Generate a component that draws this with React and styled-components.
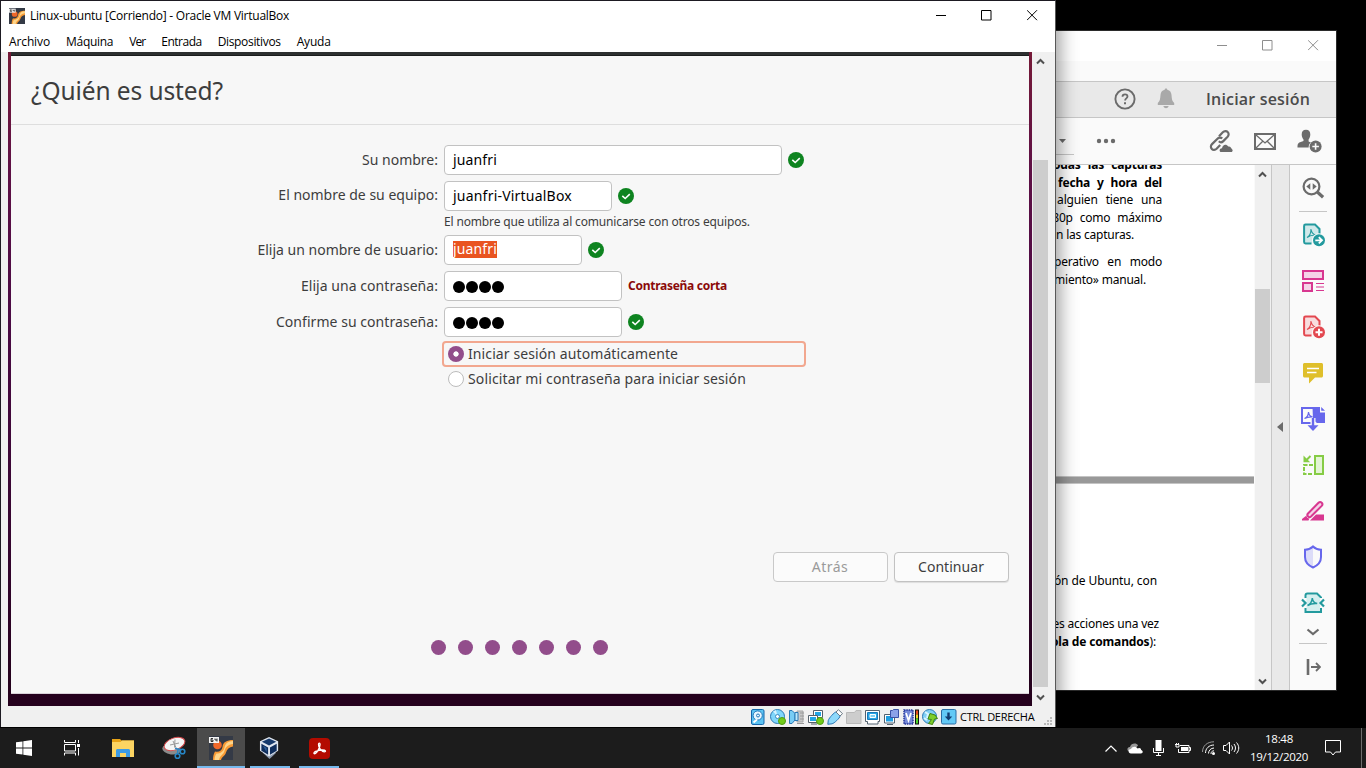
import React from "react";
import styled, { createGlobalStyle } from "styled-components";

const GlobalStyle = createGlobalStyle`
  * { box-sizing: border-box; }
  body { margin: 0; background: #000; overflow: hidden; font-family: "Open Sans", "Noto Sans", sans-serif; }
  svg { display: block; flex: none; }
`;

const Desktop = styled.div`
  position: relative;
  width: 1366px;
  height: 768px;
  overflow: hidden;
  background: #000;
`;

const Label = styled.span`
  white-space: nowrap;
  letter-spacing: ${(p) => p.$track || 0}px;
  word-spacing: ${(p) => p.$words || 0}px;
`;

/* ---------- shared window parts ---------- */

const Controls = styled.div`
  display: flex;
  align-items: center;
  gap: 35px;
  margin-left: auto;
  color: ${(p) => p.$color};
`;

function WindowControls({ color }) {
  return (
    <Controls $color={color}>
      <svg width="11" height="11" viewBox="0 0 11 11" stroke="currentColor" fill="none"><path d="M1 5.5h10" /></svg>
      <svg width="11" height="11" viewBox="0 0 11 11" stroke="currentColor" fill="none"><path d="M.5 .5h9.500v9.500h-9.500z" /></svg>
      <svg width="11" height="11" viewBox="0 0 11 11" stroke="currentColor" fill="none"><path d="M0 .2l10 10M10 .2l-10 10" /></svg>
    </Controls>
  );
}

const Chevron = ({ up, color = "#505050" }) => (
  <svg width="9" height="7" viewBox="0 0 9 7" fill="none" stroke={color} strokeWidth="2">
    <path d={up ? "M1 5.5l3.500-3.500 3.500 3.500" : "M1 1.500l3.500 3.500 3.500-3.500"} />
  </svg>
);

/* ---------- PDF reader window ---------- */

const ReaderWindow = styled.section`
  position: absolute;
  left: 1030px;
  top: 30px;
  width: 307px;
  height: 661px;
  display: flex;
  flex-direction: column;
  background: #fafafa;
  border: 1px solid #2b2b2b;
`;
const ReaderTitle = styled.header`
  height: 30px;
  flex: none;
  display: flex;
  align-items: center;
  padding: 0 17px 1px 0;
  background: #fff;
`;
const ReaderMenu = styled.div`
  height: 20px;
  flex: none;
  background: #fafafa;
`;
const ReaderTabs = styled.div`
  height: 37px;
  flex: none;
  display: flex;
  align-items: center;
  justify-content: flex-end;
  padding: 0 26px 2px 0;
  background: #e9e9e9;
  border-top: 1px solid #c6c6c6;
  border-bottom: 1px solid #c6c6c6;
`;
const SignIn = styled(Label)`
  margin-left: 31px;
  font-size: 16px;
  font-weight: 600;
  line-height: 22px;
  color: #4b4b4b;
`;
const ReaderTools = styled.div`
  height: 47px;
  flex: none;
  display: flex;
  align-items: center;
  padding: 0 14px 0 0;
  border-bottom: 1px solid #c6c6c6;
`;
const PageField = styled.div`
  width: 43px;
  height: 27px;
  display: flex;
  align-items: center;
  justify-content: flex-end;
  padding-right: 8px;
  border-bottom: 1px solid #c6c6c6;
`;
const ToolGap = styled.div`
  width: ${(p) => p.$w}px;
  flex: none;
`;
const ReaderBody = styled.div`
  flex: 1;
  min-height: 0;
  display: flex;
`;
const Pages = styled.div`
  width: 223px;
  overflow: hidden;
  background: #fff;
  color: #000;
`;
const Page = styled.div`
  height: ${(p) => p.$h}px;
  padding-top: ${(p) => p.$top || 0}px;
  overflow: hidden;
`;
const PageGap = styled.div`
  height: 8px;
  background: #999;
  border-top: 1px solid #c4c4c4;
  border-bottom: 1px solid #c4c4c4;
`;
const Line = styled.div`
  display: flex;
  justify-content: flex-end;
  height: ${(p) => p.$h || 17.4}px;
  margin-top: ${(p) => (p.$scrolled ? -9 : 0)}px;
  line-height: 17px;
  padding-right: ${(p) => p.$r || 92}px;
  font-family: "Noto Sans", sans-serif;
  font-size: 12px;
  font-weight: ${(p) => (p.$bold ? 700 : 400)};
`;
const ScrollTrack = styled.div`
  width: ${(p) => p.$w}px;
  flex: none;
  display: flex;
  flex-direction: column;
  align-items: flex-start;
  justify-content: space-between;
  background: #f0f0f0;
`;
const ScrollArrow = styled.div`
  width: 15px;
  height: 18px;
  display: flex;
  align-items: center;
  justify-content: center;
`;
const ScrollThumb = styled.div`
  width: 15px;
  height: ${(p) => p.$h}px;
  margin-top: ${(p) => p.$top}px;
  margin-bottom: auto;
  background: #cdcdcd;
`;
const Splitter = styled.div`
  width: 19px;
  flex: none;
  display: flex;
  align-items: center;
  justify-content: center;
  padding: 0 2px 2px 0;
  background: #e9e9e9;
  border-left: 1px solid #c6c6c6;
  border-right: 1px solid #c6c6c6;
`;
const ToolRail = styled.aside`
  flex: 1;
  display: flex;
  flex-direction: column;
  align-items: center;
`;
const ToolSlot = styled.div`
  height: ${(p) => p.$h || 46}px;
  padding-bottom: ${(p) => p.$lift || 0}px;
  display: flex;
  align-items: center;
  justify-content: center;
`;
const Divider = styled.div`
  width: 28px;
  height: 1px;
  background: #c6c6c6;
`;

const HelpIcon = () => (
  <svg width="22" height="22" viewBox="0 0 22 22" fill="none" stroke="#6b6b6b">
    <circle cx="11" cy="11" r="9.600" strokeWidth="1.900" />
    <path d="M8.500 8.700c0-1.500 1-2.400 2.500-2.400s2.500.9 2.500 2.200c0 1.900-2.400 1.900-2.400 4" strokeWidth="1.800" />
    <path d="M11 14.300v2" strokeWidth="2" />
  </svg>
);
const BellIcon = () => (
  <svg width="18" height="21" viewBox="0 0 18 21" fill="#a9a9a9">
    <path d="M9 .5c.8 0 1.300.5 1.300 1.300 2.700.6 4 2.600 4.200 5.200.3 4.200.6 6.200 2.700 7.900v2H.8v-2c2.100-1.700 2.400-3.700 2.700-7.900C3.700 4.400 5 2.400 7.700 1.800 7.700 1 8.200.5 9 .5z" />
    <path d="M6.300 18h5.400c-.6 1.600-1.500 2.200-2.700 2.200S6.900 19.600 6.300 18z" />
  </svg>
);
const LinkIcon = () => (
  <svg width="24" height="24" viewBox="0 0 24 24" fill="none" stroke="#6b6b6b" strokeWidth="2.200">
    <path d="M10 7.200l3.800-4c1.500-1.500 3.700-1.500 4.900-.2 1.300 1.200 1.200 3.400-.1 4.800l-4.300 4.300c-1.300 1.300-3.200 1.400-4.500.2" />
    <path d="M13.200 9.600c-1.200-1.300-3.400-1.200-4.700.1L3 15.100c-1.400 1.400-1.500 3.600-.2 4.800 1.200 1.300 3.400 1.200 4.800-.1l3.600-3.700" />
    <path d="M12 23c-1.700 0-2.300-3.200 1-3.700.6-3.800 4.200-5 6.300-1.700 2.500-.4 2.600 1.800 3.600 2.400 1.300 1 .8 3-.7 3z" fill="#6b6b6b" stroke="none" />
  </svg>
);
const MailIcon = () => (
  <svg width="22" height="17" viewBox="0 0 22 17" fill="none" stroke="#6b6b6b">
    <path d="M1 1h20v15H1z" strokeWidth="2" />
    <path d="M2 2l9 8 9-8M2 15l6.500-6.500M20 15l-6.500-6.500" strokeWidth="1.300" />
  </svg>
);
const AddUserIcon = () => (
  <svg width="25" height="24" viewBox="0 0 25 24" fill="#6b6b6b">
    <path d="M9 .8c3 0 4.300 2 4.300 4.800 0 2.200-.8 3.800-1.700 4.800v2l2.200 1c-1.600 1.300-2.300 3-2.100 5.200H.5c0-3.400.4-4.500 2.500-5.300l3.500-1.300v-1.600c-1-1-1.800-2.600-1.800-4.800C4.700 2.800 6 .8 9 .8z" />
    <circle cx="18.600" cy="17.500" r="6" />
    <path d="M18.600 14.200v6.600M15.300 17.500h6.600" stroke="#fafafa" strokeWidth="1.600" />
  </svg>
);
const acrobatMark = "M6.500 14.500c2.800-1.300 4.500-3.700 4.800-7.500.2 3.300 1.700 5 4.900 5.600-4.400-.3-7 .3-9.700 1.900z";

const ZoomToolIcon = () => (
  <svg width="24" height="24" viewBox="0 0 24 24" fill="none" stroke="#6b6b6b">
    <circle cx="10.500" cy="10.500" r="7.900" strokeWidth="2.200" />
    <path d="M16.300 16l5.800 5.300" strokeWidth="3.200" />
    <path d="M9.300 7.300v6.400l-4-3.200zM11.700 7.300v6.400l4-3.200z" fill="#6b6b6b" stroke="none" />
  </svg>
);
const PdfBadgeIcon = ({ color, tint, add }) => (
  <svg width="24" height="24" viewBox="0 0 24 24" fill="none" stroke={color}>
    <path d="M10.500 20.500H4.500a1.400 1.400 0 0 1-1.400-1.400V2.900c0-.8.600-1.400 1.400-1.400h9.500l4.500 4.500v5.500" fill={tint} strokeWidth="2" />
    <path d="M6 14.500c2.800-1.500 4-4.500 4-8.500.4 3.700 1.900 5.500 5.200 6-4.500-.2-6.700.7-9.200 2.500z" strokeWidth="1.100" />
    <circle cx="18" cy="17.300" r="7" fill="#fafafa" stroke="none" />
    <circle cx="18" cy="17.300" r="6" fill={color} stroke="none" />
    {add ? (
      <path d="M18 13.800v7M14.500 17.300h7" stroke="#fff" strokeWidth="2" />
    ) : (
      <path d="M14.300 17.300h6M17.800 14.200l3.200 3.100-3.200 3.100" stroke="#fff" strokeWidth="1.800" />
    )}
  </svg>
);
const OrganizeIcon = () => (
  <svg width="24" height="24" viewBox="0 0 24 24" fill="#f5d3e8" stroke="#d83790">
    <path d="M2 2h20v8H2zM2 14h9v8H2z" strokeWidth="2" />
    <path d="M15 14.500h8M15 18h8M15 21.500h8" strokeWidth="1.100" />
  </svg>
);
const CommentIcon = () => (
  <svg width="24" height="24" viewBox="0 0 24 24">
    <path d="M3.500 2h17c.8 0 1.500.7 1.500 1.500V15c0 .8-.7 1.500-1.500 1.500H14L8 22.500v-6H3.500c-.8 0-1.500-.7-1.500-1.500V3.500C2 2.700 2.700 2 3.500 2z" fill="#dfbf2b" />
    <path d="M6 7.500h12M6 11.500h9.500" stroke="#fff" strokeWidth="1.600" />
  </svg>
);
const CombineIcon = () => (
  <svg width="26" height="26" viewBox="0 0 26 26" fill="none" stroke="#6767ec">
    <path d="M13 2H2v15h10" strokeWidth="2" />
    <path d="M12.500 1H20v5.500h5V17h-8l-4-3zM21.200 1l3.800 3.800h-3.800z" fill="#6767ec" stroke="none" />
    <path d="M4.500 12.500c2.400-1 3.800-3 4-6.400.3 2.900 1.600 4.300 4 4.800-3.600-.2-5.700.3-8 1.600z" strokeWidth="1.200" />
    <path d="M13 12v8" stroke="#fafafa" strokeWidth="5" />
    <path d="M13 12v9" strokeWidth="2.400" />
    <path d="M7.500 19.200h11L13 25z" fill="#6767ec" stroke="none" />
  </svg>
);
const ScanIcon = () => (
  <svg width="24" height="24" viewBox="0 0 24 24" fill="none" stroke="#86cc45" strokeWidth="2">
    <path d="M14 3h8v18h-8z" fill="#e4f5d5" />
    <path d="M12 12H3v9h9" strokeDasharray="4 1.500" />
    <path d="M9.500 3L5 7.500" />
    <path d="M2.500 2.500v6.700h6.700z" fill="#86cc45" stroke="none" />
  </svg>
);
const PenIcon = () => (
  <svg width="24" height="24" viewBox="0 0 24 24" fill="none" stroke="#d83790">
    <path d="M7 14.500L17.500 3.800c1-1 2.300-1 3.200-.1s.9 2.200 0 3.200L10 17.500c-1.200 1-2.300.8-3-.1-.8-.8-.8-2 0-2.900z" fill="#f5d3e8" strokeWidth="2" />
    <path d="M5.500 16.500c0 1.700 1 2.700 2.800 3L7.500 21.500H1V20z" fill="#d83790" stroke="none" />
    <path d="M10.500 20l4.500-4.500h8v6H9z" fill="#d83790" stroke="none" />
  </svg>
);
const ShieldIcon = () => (
  <svg width="24" height="24" viewBox="0 0 24 24" fill="none">
    <path d="M12 1.500v21C6.500 20 4 16.500 4 12V5c3.500 0 6-1.500 8-3.500z" fill="#dcdcf8" />
    <path d="M12 1.500c2 2 4.500 3 8 3.200V12c0 4.800-2.700 8.200-8 10.500C6.700 20.200 4 16.800 4 12V4.700c3.500-.2 6-1.200 8-3.200z" stroke="#6767ec" strokeWidth="2" />
  </svg>
);
const CompressIcon = () => (
  <svg width="24" height="24" viewBox="0 0 24 24" fill="none" stroke="#239a9e">
    <path d="M5.500 3.500h10l3.500 3.500v13h-13.500z" fill="#d6efef" stroke="none" />
    <path d="M4.500 7V4.500C4.500 3 5 2.500 6.500 2.500H16l4 4V7M4.500 17v4h15.500v-4" strokeWidth="2" />
    <path d={acrobatMark} strokeWidth="1.500" />
    <path d="M1 8.500l3.500 3.500-3.500 3.500M23 8.500L19.500 12l3.500 3.500" strokeWidth="2.200" />
  </svg>
);

function Reader() {
  return (
    <ReaderWindow>
      <ReaderTitle><WindowControls color="#8e8e8e" /></ReaderTitle>
      <ReaderMenu />
      <ReaderTabs>
        <HelpIcon /><ToolGap $w={21} /><BellIcon />
        <SignIn $track={0.18}>Iniciar sesión</SignIn>
      </ReaderTabs>
      <ReaderTools>
        <PageField><svg width="7" height="4" viewBox="0 0 7 4"><path d="M0 0h7L3.500 4z" fill="#6b6b6b" /></svg></PageField>
        <ToolGap $w={22} />
        <svg width="20" height="6" viewBox="0 0 20 6" fill="#6b6b6b"><circle cx="3" cy="3" r="2.200" /><circle cx="10" cy="3" r="2.200" /><circle cx="17" cy="3" r="2.200" /></svg>
        <ToolGap $w={93} /><LinkIcon />
        <ToolGap $w={21} /><MailIcon />
        <ToolGap $w={21} /><AddUserIcon />
      </ReaderTools>
      <ReaderBody>
        <Pages>
          <Page $h={311}>
            <Line $bold $scrolled $h={18}><Label $track={-0.2} $words={4.4}>odas las capturas</Label></Line>
            <Line $bold><Label $track={-0.2} $words={4}>fecha y hora del</Label></Line>
            <Line><Label $track={-0.2} $words={5.1}>alguien tiene una</Label></Line>
            <Line><Label $track={-0.2} $words={4}>80p como máximo</Label></Line>
            <Line $r={120} $h={27}><Label $track={-0.22}>n las capturas.</Label></Line>
            <Line><Label $track={-0.2} $words={5.6}>perativo en modo</Label></Line>
            <Line $r={108}><Label $track={-0.21}>miento» manual.</Label></Line>
          </Page>
          <PageGap />
          <Page $h={206} $top={88}>
            <Line $r={97} $h={43}><Label $track={-0.09}>ón de Ubuntu, con</Label></Line>
            <Line $r={95} $h={18}><Label $track={-0.2}>es acciones una vez</Label></Line>
            <Line $r={98}><Label $track={-0.15}><b>ola de comandos</b>):</Label></Line>
          </Page>
        </Pages>
        <ToolGap $w={1} />
        <ScrollTrack $w={16}>
          <ScrollArrow><Chevron up /></ScrollArrow>
          <ScrollThumb $top={106} $h={94} />
          <ScrollArrow><Chevron /></ScrollArrow>
        </ScrollTrack>
        <Splitter><svg width="6" height="10" viewBox="0 0 6 10"><path d="M6 0v10L0 5z" fill="#6b6b6b" /></svg></Splitter>
        <ToolRail>
          <ToolSlot><ZoomToolIcon /></ToolSlot>
          <Divider />
          <ToolSlot><PdfBadgeIcon color="#239a9e" tint="#d0e9ea" /></ToolSlot>
          <ToolSlot><OrganizeIcon /></ToolSlot>
          <ToolSlot><PdfBadgeIcon color="#e34850" tint="#f8dcde" add /></ToolSlot>
          <ToolSlot><CommentIcon /></ToolSlot>
          <ToolSlot><CombineIcon /></ToolSlot>
          <ToolSlot><ScanIcon /></ToolSlot>
          <ToolSlot><PenIcon /></ToolSlot>
          <ToolSlot><ShieldIcon /></ToolSlot>
          <ToolSlot><CompressIcon /></ToolSlot>
          <ToolSlot $h={17} $lift={4}><svg width="14" height="9" viewBox="0 0 14 9" fill="none" stroke="#6b6b6b" strokeWidth="2.200"><path d="M1.500 1.500l5.500 4.500 5.500-4.500" /></svg></ToolSlot>
          <Divider />
          <ToolSlot><svg width="15" height="16" viewBox="0 0 15 16" fill="none" stroke="#6b6b6b"><path d="M2 0v16" strokeWidth="2.600" /><path d="M5 8H14M10 4l4 4-4 4" strokeWidth="1.800" /></svg></ToolSlot>
        </ToolRail>
      </ReaderBody>
    </ReaderWindow>
  );
}

/* ---------- VirtualBox window ---------- */

const VmWindow = styled.section`
  position: absolute;
  left: 0;
  top: 0;
  width: 1056px;
  height: 727px;
  display: flex;
  flex-direction: column;
  background: #f0f0f0;
  border: 1px solid #1d1a22;
  border-right-color: #585858;
  border-bottom: 0;
  box-shadow: 3px 2px 16px 2px rgba(0, 0, 0, 0.36);
`;
const VmTitle = styled.header`
  height: 31px;
  flex: none;
  display: flex;
  align-items: center;
  padding: 0 17px 2px 8px;
  background: #fff;
  font-size: 12px;
  color: #000;
`;
const VmMenu = styled.nav`
  height: 20px;
  flex: none;
  display: flex;
  align-items: center;
  padding-left: 8px;
  gap: 16px;
  background: #fff;
  font-size: 12px;
  line-height: 16px;
  color: #000;
`;
const VmBody = styled.div`
  display: flex;
  height: 654px;
  flex: none;
  padding-left: 7px;
`;
const Guest = styled.main`
  width: 1024px;
  flex: none;
  padding: 0 3px 12px;
  background: linear-gradient(180deg, #761a38 0, #5e1045 18%, #4b0a44 40%, #35052f 75%, #25011d 96%);
`;
const Panel = styled.div`
  height: 4px;
  background: #2d3030;
  border-bottom: 1px solid #1b1d1d;
`;
const Installer = styled.div`
  height: 638px;
  display: flex;
  flex-direction: column;
  background: #f7f7f7;
  border-bottom: 1px solid #d9d2d8;
  font-family: "Noto Sans", "Open Sans", sans-serif;
  font-size: 14px;
  color: #3d3d3d;
`;
const Heading = styled.h1`
  height: 69px;
  flex: none;
  margin: 0;
  padding: 0 0 0 20px;
  border-bottom: 1px solid #dedede;
  font-size: 24.5px;
  font-weight: 400;
  line-height: 69px;
`;
const Form = styled.div`
  display: flex;
  flex-direction: column;
  padding-top: 20px;
  height: 427px;
  flex: none;
`;
const FieldRow = styled.div`
  display: flex;
  align-items: center;
  height: 30px;
  margin-bottom: ${(p) => (p.$tight ? 0 : 6)}px;
`;
const Caption = styled.div`
  width: 427px;
  margin-right: 6px;
  padding-bottom: ${(p) => (p.$high ? 4 : 2)}px;
  display: flex;
  justify-content: flex-end;
`;
const Input = styled.div`
  width: ${(p) => p.$w}px;
  height: 30px;
  margin-right: 6px;
  padding: 0 0 2px 8px;
  display: flex;
  align-items: center;
  border: 1px solid #c2c2c2;
  border-radius: 4px;
  background: #fff;
  color: #000;
`;
const Selected = styled.mark`
  height: 17px;
  line-height: 16px;
  background: #e95420;
  color: #fff;
`;
const Bullets = styled.div`
  display: flex;
  gap: 1px;
  padding-top: 4px;
`;
const Bullet = styled.i`
  width: 12px;
  height: 12px;
  border-radius: 50%;
  background: #000;
`;
const Hint = styled.div`
  height: 24px;
  padding-left: 433px;
  font-size: 12px;
  line-height: 21px;
`;
const Warning = styled(Label)`
  padding-bottom: 2px;
  color: #8b0a0a;
  font-size: 12px;
  font-weight: 700;
`;
const Option = styled.div`
  width: 364px;
  height: 26px;
  margin-left: 431px;
  margin-top: ${(p) => (p.$focus ? -2 : -1)}px;
  padding-left: 4px;
  display: flex;
  align-items: center;
  gap: 4px;
  line-height: 19px;
  border: 2px solid ${(p) => (p.$focus ? "#f2a78f" : "transparent")};
  border-radius: 4px;
`;
const OptionText = styled(Label)`
  padding-bottom: 2px;
`;
const Radio = styled.span`
  width: 16px;
  height: 16px;
  flex: none;
  border-radius: 50%;
  background: ${(p) => (p.$on ? "radial-gradient(circle, #fff 0 2.300px, #924d8b 3px)" : "#fff")};
  border: ${(p) => (p.$on ? "0" : "1px solid #bcbcbc")};
`;
const Actions = styled.div`
  display: flex;
  justify-content: flex-end;
  gap: 6px;
  padding-right: 20px;
`;
const Button = styled.div`
  width: 115px;
  height: 30px;
  padding: 0 1px 2px 0;
  display: flex;
  align-items: center;
  justify-content: center;
  border: 1px solid ${(p) => (p.$off ? "#c9c9c9" : "#c2c2c2")};
  border-radius: 4px;
  background: #fbfbfb;
  color: ${(p) => (p.$off ? "#9a9a9a" : "#3d3d3d")};
  box-shadow: ${(p) => (p.$off ? "none" : "0 1px 1px rgba(0,0,0,.1)")};
`;
const Steps = styled.div`
  display: flex;
  gap: 12px;
  padding: 58px 0 0 420px;
`;
const Step = styled.i`
  width: 15px;
  height: 15px;
  border-radius: 50%;
  background: #924d8b;
`;
const StatusBar = styled.footer`
  flex: 1;
  display: flex;
  align-items: center;
  justify-content: flex-end;
  gap: 3px;
  padding-right: 2px;
`;
const HostKey = styled(Label)`
  width: 81px;
  font-size: 11px;
  color: #000;
`;

const Check = () => (
  <svg width="16" height="16" viewBox="0 0 16 16"><circle cx="8" cy="8" r="8" fill="#0e8420" /><path d="M4.300 7.800l2.900 2.700 4.600-4.300" fill="none" stroke="#fff" strokeWidth="1.600" /></svg>
);
const Dots = () => <Bullets><Bullet /><Bullet /><Bullet /><Bullet /></Bullets>;

const VmLogo = ({ size }) => (
  <svg width={size} height={size} viewBox="0 0 24 24">
    <path d="M0 0h24v24H0z" fill="#343a46" />
    <circle cx="8.500" cy="9" r="4.300" fill="#f0682a" />
    <path d="M4 24c0-3 .5-6 2-8.500 4 1 7-1 7.500-4.500C14 6 18 4 24 4v6.500c-4 .5-6 2.500-7 6-1 3.500-4 4-5 7.500z" fill="#f89a35" />
    <path d="M5.500 24c.2-3 .8-5 2-6.500 4 0 7-2 8-6C16.500 7 19 5.300 24 5v3c-5 .5-7.500 3-8.500 7-1.200 4-4.500 4-5.500 9z" fill="#fdd58a" />
    <path d="M0 1h10v6H0z" fill="#f2f2f2" />
    <path d="M4 2.500H2v3h2V4H2M6 2.500V4h2M8 2.500v3" fill="none" stroke="#222" strokeWidth=".9" />
  </svg>
);

const S = ({ children }) => <svg width="16" height="16" viewBox="0 0 16 16" fill="none">{children}</svg>;
const StatusIcons = () => (
  <>
    <S><rect x=".5" y=".5" width="12.500" height="15" rx="1.500" fill="#5cc3f2" stroke="#1567ad" /><circle cx="6.700" cy="6.500" r="4.600" fill="#e8f7ff" stroke="#2277bb" /><circle cx="7" cy="6.500" r="1.500" stroke="#2277bb" /><path d="M2.500 13.500l3.500-3" stroke="#fff" strokeWidth="2" /></S>
    <S><circle cx="7.500" cy="7.500" r="7" fill="#80d6fb" stroke="#2a78b5" /><path d="M7.500 7.500L3 2.500l3-1.500zM7.500 7.500l5 4-2 2z" fill="#d5f3ff" /><circle cx="7.500" cy="7.500" r="2" fill="#fff" stroke="#3a8ac0" /><circle cx="12" cy="12" r="3.500" fill="#72cb1a" stroke="#4e9c12" /></S>
    <S><path d="M8 2h6v11H8z" fill="#c9c9c9" stroke="#a5a5a5" /><path d="M11 4h4M11 7h4M11 10h4M8 14.500h7" stroke="#999" /><path d="M.5 1.500H3L6 4.500v6.500L3 14.500H.5z" fill="#78cdf5" stroke="#2a78b5" /><path d="M6 3.500h3v8H6z" fill="#bde9fb" stroke="#2a78b5" /></S>
    <S><path d="M5.500 1.500h9v7h-9z" fill="#fff" stroke="#55606a" /><path d="M7 3h6v4H7z" fill="#20a6e5" /><path d="M.5 6.500h9v7h-9zM3 15h6" fill="#fff" stroke="#55606a" /><path d="M2 8h6v4H2z" fill="#20a6e5" /><circle cx="12" cy="12" r="3.500" fill="#72cb1a" stroke="#4e9c12" /></S>
    <S><path d="M9 3l4 4c0 2-6 7.500-8 7.800l-4.200.5.500-4C2 9 7.500 3 9 3z" fill="#8dd9fb" stroke="#2a78b5" /><path d="M9 3l2.500-2.300 4 4L13 7z" fill="#fff" stroke="#6a7a85" /></S>
    <S><path d="M.5 3.500h8l1.500-2h5v13H.5z" fill="#cdcdcd" stroke="#b9b9b9" /></S>
    <S><path d="M.5 1.500h14v11H13V15H2.500v-2.500h-2z" fill="#fff" stroke="#536270" /><path d="M2.500 3.500h10v7h-10z" fill="#27a4e4" stroke="#1779bb" /><path d="M5 5.500h5.500v3H5z" fill="#7fd3f7" stroke="#fff" /></S>
    <S><path d="M.5 5.500h10v8.500H.5zM3 15.500h6" fill="#fff" stroke="#536270" /><path d="M2 7h7v5.500H2z" fill="#1e9ee0" /><path d="M6.500 1.500h2l1-1h5v8h-8z" fill="#8ba2e8" stroke="#3951a5" /></S>
    <S><rect x="1" y="1" width="9" height="14" fill="#7589d8" /><rect x="1" y="1" width="9" height="14" stroke="#26379b" strokeWidth="1.500" strokeDasharray="1.500 .8" /><path d="M3 4l2.500 7.500L8 4" stroke="#fff" strokeWidth="1.800" /><path d="M12 .5h4v15h-4z" fill="#111" /><path d="M13 1.500h2v4h-2z" fill="#e64b22" /><path d="M13 5.500h2v4h-2z" fill="#f3d020" /><path d="M13 9.500h2v5h-2z" fill="#4bd32a" /></S>
    <S><circle cx="7.500" cy="7.500" r="7" fill="#80cff5" stroke="#2a78b5" /><path d="M3 3l3 2-1 4M5 11l-3-2" stroke="#d9f5ff" strokeWidth="2" /><path d="M8 4.500l5 1.500 2.500 3.500-3 .5-2 5.500-4-1 3-4-3.500-.5z" fill="#7dcd2c" stroke="#40850d" /></S>
    <S><rect x=".5" y=".5" width="14.500" height="14.500" rx="1.500" fill="#62c9f6" stroke="#2a6ca5" /><path d="M7.500 3.500v6" stroke="#123c70" strokeWidth="2.400" /><path d="M3.800 7.500h7.400l-3.700 4z" fill="#123c70" /></S>
  </>
);

function VirtualMachine() {
  return (
    <VmWindow>
      <VmTitle>
        <VmLogo size={16} /><ToolGap $w={5} />
        <Label $track={-0.25}>Linux-ubuntu [Corriendo] - Oracle VM VirtualBox</Label>
        <WindowControls color="#000" />
      </VmTitle>
      <VmMenu>
        <Label $track={-0.12}>Archivo</Label><Label $track={-0.3}>Máquina</Label><Label $track={-0.9}>Ver</Label>
        <Label $track={-0.5}>Entrada</Label><Label $track={-0.33}>Dispositivos</Label><Label $track={-0.19}>Ayuda</Label>
      </VmMenu>
      <VmBody>
        <Guest>
          <Panel />
          <Installer>
            <Heading><Label $track={-0.11}>¿Quién es usted?</Label></Heading>
            <Form>
              <FieldRow><Caption><Label>Su nombre:</Label></Caption><Input $w={338}><Label $track={0.15}>juanfri</Label></Input><Check /></FieldRow>
              <FieldRow $tight><Caption $high><Label>El nombre de su equipo:</Label></Caption><Input $w={168}><Label $track={0.21}>juanfri-VirtualBox</Label></Input><Check /></FieldRow>
              <Hint><Label $track={-0.155}>El nombre que utiliza al comunicarse con otros equipos.</Label></Hint>
              <FieldRow><Caption><Label>Elija un nombre de usuario:</Label></Caption><Input $w={138}><Selected><Label $track={0.15}>juanfri</Label></Selected></Input><Check /></FieldRow>
              <FieldRow><Caption><Label $track={0.05}>Elija una contraseña:</Label></Caption><Input $w={178}><Dots /></Input><Warning $track={-0.27}>Contraseña corta</Warning></FieldRow>
              <FieldRow><Caption><Label $track={0.05}>Confirme su contraseña:</Label></Caption><Input $w={178}><Dots /></Input><Check /></FieldRow>
              <Option $focus><Radio $on /><OptionText $track={0.1}>Iniciar sesión automáticamente</OptionText></Option>
              <Option><Radio /><OptionText $track={0.13}>Solicitar mi contraseña para iniciar sesión</OptionText></Option>
            </Form>
            <Actions>
              <Button $off><Label $track={0.5}>Atrás</Label></Button>
              <Button><Label $track={0.05}>Continuar</Label></Button>
            </Actions>
            <Steps>{[0, 1, 2, 3, 4, 5, 6].map((n) => <Step key={n} />)}</Steps>
          </Installer>
        </Guest>
        <ToolGap $w={1} />
        <ScrollTrack $w={15}>
          <ScrollArrow><Chevron up /></ScrollArrow>
          <ScrollThumb $top={90} $h={527} />
          <ScrollArrow><Chevron /></ScrollArrow>
        </ScrollTrack>
      </VmBody>
      <StatusBar>
        <StatusIcons />
        <HostKey $track={-0.25}>CTRL DERECHA</HostKey>
        <svg width="9" height="21" viewBox="0 0 9 21" fill="#b9b9b9"><path d="M6 11h2v2H6zM3 14h2v2H3zM6 14h2v2H6zM0 17h2v2H0zM3 17h2v2H3zM6 17h2v2H6z" /></svg>
      </StatusBar>
    </VmWindow>
  );
}

/* ---------- taskbar ---------- */

const Taskbar = styled.footer`
  position: absolute;
  left: 0;
  top: 728px;
  width: 1366px;
  height: 40px;
  display: flex;
  background: #1c1c1c;
  color: #fff;
`;
const TaskButton = styled.div`
  width: ${(p) => p.$w || 48}px;
  height: 40px;
  margin-right: ${(p) => p.$gap || 0}px;
  display: flex;
  align-items: center;
  justify-content: center;
  background: ${(p) => (p.$active ? "#4b4b4b" : "transparent")};
  box-shadow: ${(p) => (p.$open ? "inset 0 -2px #76b9ed" : "none")};
`;
const Tray = styled.div`
  margin-left: auto;
  display: flex;
  align-items: center;
`;
const Clock = styled.div`
  width: 70px;
  display: flex;
  flex-direction: column;
  align-items: center;
  font-size: 11.5px;
  line-height: 18px;
`;
const ShowDesktop = styled.div`
  width: 5px;
  height: 40px;
  margin-left: 20px;
  border-left: 1px solid #6d6d6d;
`;

function Bar() {
  return (
    <Taskbar>
      <TaskButton><svg width="16" height="16" viewBox="0 0 16 16" fill="#fff"><path d="M0 2.300L6.500 1.400v6.200H0zM7.300 1.300L16 0v7.600H7.300zM0 8.400h6.500v6.200L0 13.700zM7.300 8.400H16V16l-8.700-1.200z" /></svg></TaskButton>
      <TaskButton><svg width="17" height="16" viewBox="0 0 17 16" fill="none" stroke="#fff"><path d="M.5 0v2.500h11V0M.5 15.500V13h11v2.500M.5 4.500h11v6.500H.5zM14.500 0v3M14.500 8v7.500" /><path d="M13 4h3v3h-3z" fill="#fff" stroke="none" /></svg></TaskButton>
      <TaskButton $w={54}><svg width="22" height="18" viewBox="0 0 22 18"><path d="M0 0h8l1.500 1.500H22V18H0z" fill="#e8a317" /><path d="M0 3h8.500L10 1.500h12V18H0z" fill="#fcd462" /><path d="M4 18v-6.500c0-.8.700-1.500 1.500-1.500h11c.8 0 1.500.7 1.500 1.500V18h-4v-4H8v4z" fill="#3d9be4" /></svg></TaskButton>
      <TaskButton $w={47}><svg width="24" height="24" viewBox="0 0 24 24" fill="none"><ellipse cx="9.500" cy="13.500" rx="9.300" ry="5" fill="#8b8b8b" transform="rotate(8 10 13.500)" /><ellipse cx="12.500" cy="8" rx="10.800" ry="6" fill="#f5f5f5" stroke="#d5494b" transform="rotate(-20 12.500 8)" /><path d="M13 3.500l-.5 8M8 9l9-2M11 5l5 11" stroke="#999" /><path d="M13 12.500l6 1M15.500 17.500l.5-4" stroke="#2687c8" strokeWidth="1.500" /><circle cx="15.500" cy="20" r="2.300" stroke="#2687c8" strokeWidth="1.600" /><circle cx="20.500" cy="15.500" r="2.300" stroke="#2687c8" strokeWidth="1.600" /></svg></TaskButton>
      <TaskButton $active $open $gap={5}><VmLogo size={24} /></TaskButton>
      <TaskButton $w={40} $gap={9} $open><svg width="22" height="24" viewBox="0 0 23 24"><path d="M4 17l7 6.500 7-6.500-7-3z" fill="#8d9bb0" /><path d="M10.500 .5l9.500 4.500v10L10.500 21 1 15V5z" fill="#dfe6ef" /><path d="M10.500 2l7.500 3.500-7.500 4L3 5.500z" fill="#163a6c" /><path d="M2.500 7.500l7 4v7.500l-7-4zM18.500 7.500l-7 4v7.500l7-4z" fill="#0f2e5c" /><path d="M4 9.500l4 2.500v4.500z" fill="#2c5f9b" /></svg></TaskButton>
      <TaskButton $w={40} $open><svg width="21" height="21" viewBox="0 0 21 21"><rect width="21" height="21" rx="4" fill="#b30b00" /><path d="M5 15.500c-.7-1.500 4-3.500 8.500-3.500 3.500 0 3.700 1.800 1.800 1.800-2.800 0-6-4.500-5.800-7.500.1-1.500 1.600-1.500 1.600.2 0 3.500-4.300 10.500-6.100 9z" fill="none" stroke="#fff" strokeWidth="1.300" /></svg></TaskButton>
      <Tray>
        <svg width="12" height="7" viewBox="0 0 12 7" fill="none" stroke="#fff" strokeWidth="1.200"><path d="M.5 6.500L6 1l5.500 5.500" /></svg>
        <ToolGap $w={10} />
        <svg width="16" height="11" viewBox="0 0 16 11"><path d="M1 8C-.5 6 1 3.800 3 4c1-4 6.500-4.500 8-1.500L6 8z" fill="#9a9a9a" /><path d="M4 10.500c-3 0-3.500-4 0-4.500 1.500-3 5-3 6.500-.5C13 4 14.500 6 14 7c2.500.5 2 3.500 0 3.500z" fill="#fff" /></svg>
        <ToolGap $w={10} />
        <svg width="11" height="16" viewBox="0 0 11 16" fill="none" stroke="#fff"><path d="M2.500 0h6v11h-6z" fill="#fff" stroke="none" /><path d="M.5 8v4.500h10V8M5.500 12.500v3M3 15.500h5" /></svg>
        <ToolGap $w={11} />
        <svg width="16" height="11" viewBox="0 0 16 11" fill="none" stroke="#fff"><path d="M5 2.500h9v7H3.500V6M14 4.500h1.500v3H14" /><path d="M6 4h7v4H6z" fill="#fff" stroke="none" /><path d="M0 1.500h4v2.500H1V1.500M1.500 0v2M3.500 0v2" /></svg>
        <ToolGap $w={11} />
        <svg width="13" height="14" viewBox="0 0 13 14" fill="none" stroke="#fff"><path d="M.5 11C.5 5 5 .8 12 .8" stroke="#999" /><path d="M3.500 12C3.500 7.500 7 4 12 4M6.500 12.500C6.500 9.500 9 7 12 7M9 13c0-2 1-3.200 3-3.200" /><circle cx="11.500" cy="12.500" r="1.500" fill="#fff" stroke="none" /></svg>
        <ToolGap $w={8} />
        <svg width="17" height="14" viewBox="0 0 17 14" fill="none" stroke="#fff"><path d="M.5 4.500H3L6.500 1v12L3 9.500H.5zM8.500 4.500c1.300 1.500 1.300 3.500 0 5M11 3c2 2.500 2 5.500 0 8M13.500 1.500c3 3.500 3 7.500 0 11" /></svg>
        <ToolGap $w={4} />
        <Clock><Label $track={-0.3}>18:48</Label><Label $track={-0.32}>19/12/2020</Label></Clock>
        <ToolGap $w={11} />
        <svg width="16" height="16" viewBox="0 0 16 16" fill="none" stroke="#fff"><path d="M.5 .5h15v11.500H10.500L8 15l-2.500-3H.5z" /></svg>
        <ShowDesktop />
      </Tray>
    </Taskbar>
  );
}

export default function App() {
  return (
    <Desktop>
      <GlobalStyle />
      <Reader />
      <VirtualMachine />
      <Bar />
    </Desktop>
  );
}
